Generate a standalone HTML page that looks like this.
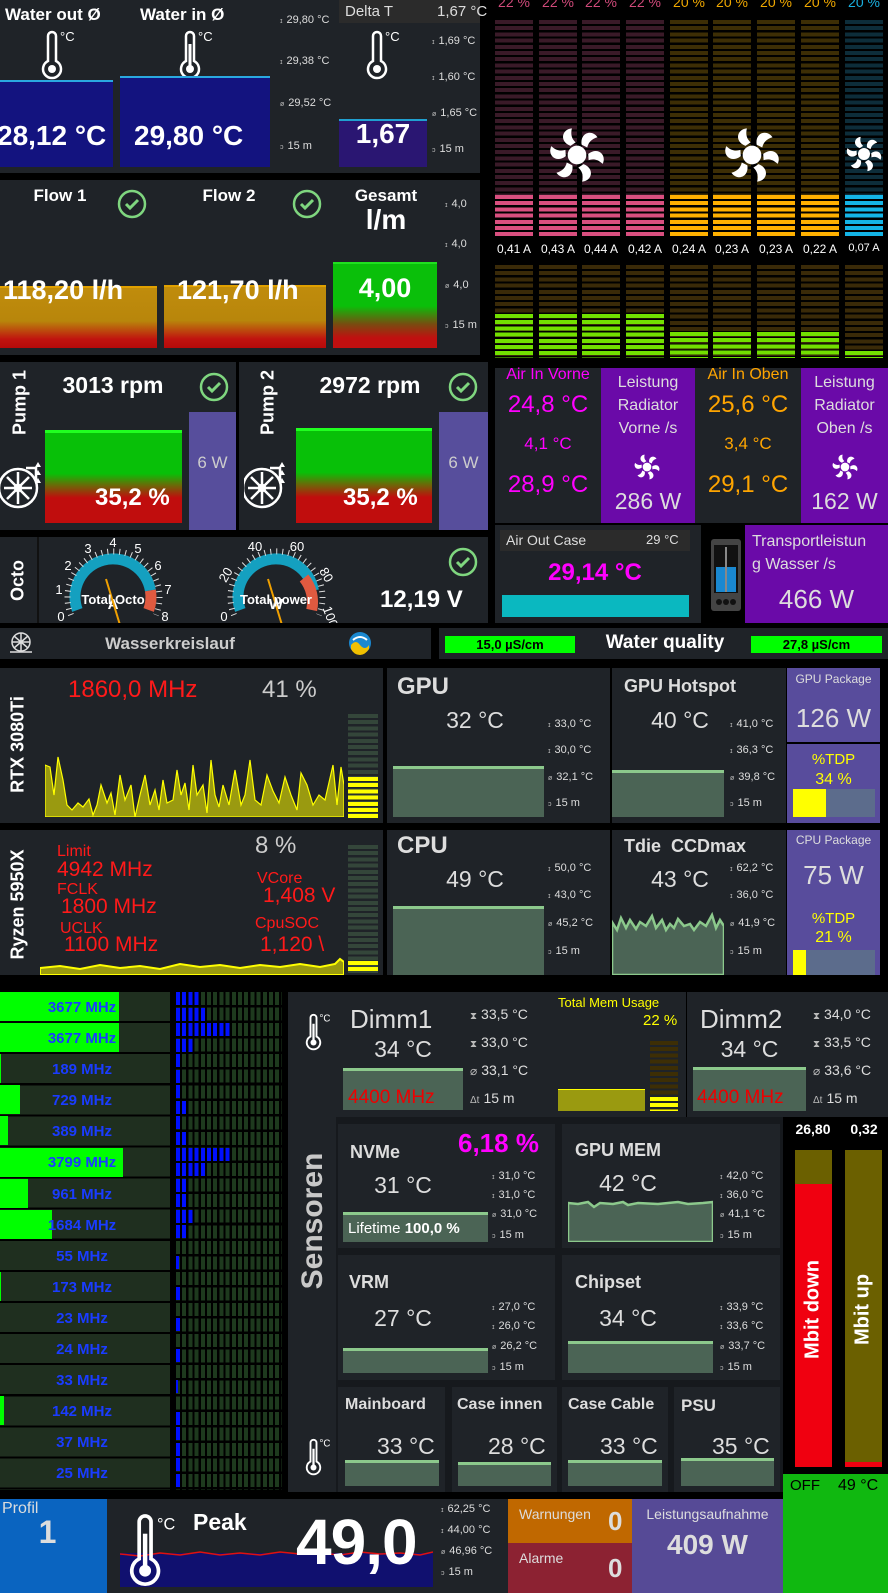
<!DOCTYPE html>
<html><head><meta charset="utf-8"><style>
*{margin:0;padding:0;box-sizing:border-box}
body{width:888px;height:1593px;background:#000;position:relative;overflow:hidden;font-family:"Liberation Sans",sans-serif;color:#fff}
div,span,svg{position:absolute}
.p{background:#1f2328}
.b{font-weight:bold}
.st{font-size:11px;color:#ddd;white-space:nowrap}
.st i{font-style:normal;font-size:7px;margin-right:4px;color:#bbb}
.c{text-align:center;white-space:nowrap}
.nw{white-space:nowrap}
.ch{background:#4b6455;border-top:3px solid #8cc98c}
.vt{transform:rotate(-90deg);transform-origin:center;white-space:nowrap;text-align:center}
.stripe{background:repeating-linear-gradient(to bottom,var(--c) 0 4px,transparent 4px 6.2px)}
.hs{background:repeating-linear-gradient(to right,var(--c) 0 4px,transparent 4px 6.2px)}
</style></head><body>

<!-- ===== TOP LEFT: water temps ===== -->
<div class="p" style="left:0;top:0;width:480px;height:173px"></div>
<div class="b nw" style="left:5px;top:5px;font-size:17px">Water out Ø</div>
<div class="b nw" style="left:140px;top:5px;font-size:17px">Water in Ø</div>
<svg style="left:38px;top:28px" width="40" height="54" viewBox="0 0 40 54"><path d="M10 8 a4 4 0 0 1 8 0 v25 a9 9 0 1 1 -8 0z" fill="none" stroke="#fff" stroke-width="2.5"/><circle cx="14" cy="41" r="4" fill="#fff"/><text x="22" y="13" fill="#fff" font-size="13" font-family="Liberation Sans">°C</text></svg>
<svg style="left:176px;top:28px" width="40" height="54" viewBox="0 0 40 54"><path d="M10 8 a4 4 0 0 1 8 0 v25 a9 9 0 1 1 -8 0z" fill="none" stroke="#fff" stroke-width="2.5"/><line x1="14" y1="16" x2="14" y2="38" stroke="#fff" stroke-width="3"/><circle cx="14" cy="41" r="4" fill="#fff"/><text x="22" y="13" fill="#fff" font-size="13" font-family="Liberation Sans">°C</text></svg>
<div style="left:0;top:80px;width:113px;height:87px;background:#13137f;border-top:2px solid #2aa8e0"></div>
<div style="left:120px;top:76px;width:150px;height:91px;background:#13137f;border-top:2px solid #2aa8e0"></div>
<div class="b nw" style="left:-3px;top:120px;font-size:28px">28,12 °C</div>
<div class="b nw" style="left:134px;top:120px;font-size:28px">29,80 °C</div>
<div class="st" style="left:280px;top:14px"><i>ɪ</i>29,80 °C</div>
<div class="st" style="left:280px;top:55px"><i>ɪ</i>29,38 °C</div>
<div class="st" style="left:280px;top:97px"><i>ø</i>29,52 °C</div>
<div class="st" style="left:280px;top:140px"><i>ↄ</i>15 m</div>
<div style="left:339px;top:0;width:141px;height:23px;background:#2b2b2b"></div>
<div class="nw" style="left:345px;top:3px;font-size:15px;color:#ddd">Delta T</div>
<div class="nw" style="left:437px;top:3px;font-size:15px;color:#ddd">1,67 °C</div>
<svg style="left:363px;top:28px" width="40" height="54" viewBox="0 0 40 54"><path d="M10 8 a4 4 0 0 1 8 0 v25 a9 9 0 1 1 -8 0z" fill="none" stroke="#fff" stroke-width="2.5"/><circle cx="14" cy="41" r="4" fill="#fff"/><text x="22" y="13" fill="#fff" font-size="13" font-family="Liberation Sans">°C</text></svg>
<div style="left:339px;top:119px;width:88px;height:48px;background:#2a1672;border-top:2px solid #20a0d0"></div>
<div class="b c" style="left:339px;top:118px;width:88px;font-size:28px">1,67</div>
<div class="st" style="left:432px;top:35px"><i>ɪ</i>1,69 °C</div>
<div class="st" style="left:432px;top:71px"><i>ɪ</i>1,60 °C</div>
<div class="st" style="left:432px;top:107px"><i>ø</i>1,65 °C</div>
<div class="st" style="left:432px;top:143px"><i>ↄ</i>15 m</div>

<!-- ===== Flow ===== -->
<div class="p" style="left:0;top:180px;width:480px;height:175px"></div>
<div class="b c" style="left:20px;top:186px;width:80px;font-size:17px">Flow 1</div>
<div class="b c" style="left:189px;top:186px;width:80px;font-size:17px">Flow 2</div>
<svg style="left:117px;top:189px" width="30" height="30"><circle cx="15" cy="15" r="13" fill="none" stroke="#7fd67f" stroke-width="2.5"/><path d="M9 15 l4 4 l8 -8" stroke="#7fd67f" stroke-width="3" fill="none"/></svg>
<svg style="left:292px;top:189px" width="30" height="30"><circle cx="15" cy="15" r="13" fill="none" stroke="#7fd67f" stroke-width="2.5"/><path d="M9 15 l4 4 l8 -8" stroke="#7fd67f" stroke-width="3" fill="none"/></svg>
<div class="b c" style="left:336px;top:186px;width:100px;font-size:17px">Gesamt</div>
<div class="b c" style="left:336px;top:204px;width:100px;font-size:28px">l/m</div>
<div style="left:0;top:286px;width:157px;height:62px;background:linear-gradient(#c08c0c 0%,#b8860b 55%,#c0140f 85%,#b50a0a 100%);border-top:2px solid #e0a000"></div>
<div style="left:164px;top:285px;width:162px;height:63px;background:linear-gradient(#c08c0c 0%,#b8860b 55%,#c0140f 85%,#b50a0a 100%);border-top:2px solid #e0a000"></div>
<div style="left:333px;top:262px;width:104px;height:86px;background:linear-gradient(#0abf0a 0%,#0abf0a 50%,#7a4a10 72%,#c01010 88%,#c01010 100%);border-top:2px solid #20e020"></div>
<div class="b nw" style="left:3px;top:275px;font-size:27px">118,20 l/h</div>
<div class="b nw" style="left:177px;top:275px;font-size:27px">121,70 l/h</div>
<div class="b c" style="left:333px;top:273px;width:104px;font-size:27px">4,00</div>
<div class="st" style="left:445px;top:198px"><i>ɪ</i>4,0</div>
<div class="st" style="left:445px;top:238px"><i>ɪ</i>4,0</div>
<div class="st" style="left:445px;top:279px"><i>ø</i>4,0</div>
<div class="st" style="left:445px;top:319px"><i>ↄ</i>15 m</div>

<!-- ===== Fans ===== -->
<div id="fans"></div>
<div style="left:495px;top:20px;width:38px;height:175px;--c:#3a1a28" class="stripe"></div>
<div style="left:539px;top:20px;width:38px;height:175px;--c:#3a1a28" class="stripe"></div>
<div style="left:582px;top:20px;width:38px;height:175px;--c:#3a1a28" class="stripe"></div>
<div style="left:626px;top:20px;width:38px;height:175px;--c:#3a1a28" class="stripe"></div>
<div style="left:670px;top:20px;width:38px;height:175px;--c:#3d2e05" class="stripe"></div>
<div style="left:713px;top:20px;width:38px;height:175px;--c:#3d2e05" class="stripe"></div>
<div style="left:757px;top:20px;width:38px;height:175px;--c:#3d2e05" class="stripe"></div>
<div style="left:801px;top:20px;width:38px;height:175px;--c:#3d2e05" class="stripe"></div>
<div style="left:845px;top:20px;width:38px;height:175px;--c:#0d2d3a" class="stripe"></div>
<div style="left:495px;top:195px;width:38px;height:42px;--c:#d94f7f" class="stripe"></div>
<div style="left:539px;top:195px;width:38px;height:42px;--c:#d94f7f" class="stripe"></div>
<div style="left:582px;top:195px;width:38px;height:42px;--c:#d94f7f" class="stripe"></div>
<div style="left:626px;top:195px;width:38px;height:42px;--c:#d94f7f" class="stripe"></div>
<div style="left:670px;top:195px;width:38px;height:42px;--c:#ffb000" class="stripe"></div>
<div style="left:713px;top:195px;width:38px;height:42px;--c:#ffb000" class="stripe"></div>
<div style="left:757px;top:195px;width:38px;height:42px;--c:#ffb000" class="stripe"></div>
<div style="left:801px;top:195px;width:38px;height:42px;--c:#ffb000" class="stripe"></div>
<div style="left:845px;top:195px;width:38px;height:42px;--c:#14b4e6" class="stripe"></div>
<div class="c" style="left:489px;top:-6px;width:50px;font-size:14px;color:#d04a7a">22 %</div>
<div class="c" style="left:533px;top:-6px;width:50px;font-size:14px;color:#d04a7a">22 %</div>
<div class="c" style="left:576px;top:-6px;width:50px;font-size:14px;color:#d04a7a">22 %</div>
<div class="c" style="left:620px;top:-6px;width:50px;font-size:14px;color:#d04a7a">22 %</div>
<div class="c" style="left:664px;top:-6px;width:50px;font-size:14px;color:#f0a800">20 %</div>
<div class="c" style="left:707px;top:-6px;width:50px;font-size:14px;color:#f0a800">20 %</div>
<div class="c" style="left:751px;top:-6px;width:50px;font-size:14px;color:#f0a800">20 %</div>
<div class="c" style="left:795px;top:-6px;width:50px;font-size:14px;color:#f0a800">20 %</div>
<div class="c" style="left:839px;top:-6px;width:50px;font-size:14px;color:#1ab0e0">20 %</div>
<div class="c" style="left:489px;top:242px;width:50px;font-size:12px">0,41 A</div>
<div class="c" style="left:533px;top:242px;width:50px;font-size:12px">0,43 A</div>
<div class="c" style="left:576px;top:242px;width:50px;font-size:12px">0,44 A</div>
<div class="c" style="left:620px;top:242px;width:50px;font-size:12px">0,42 A</div>
<div class="c" style="left:664px;top:242px;width:50px;font-size:12px">0,24 A</div>
<div class="c" style="left:707px;top:242px;width:50px;font-size:12px">0,23 A</div>
<div class="c" style="left:751px;top:242px;width:50px;font-size:12px">0,23 A</div>
<div class="c" style="left:795px;top:242px;width:50px;font-size:12px">0,22 A</div>
<div class="c" style="left:839px;top:242px;width:50px;font-size:11px">0,07 A</div>
<div style="left:495px;top:265px;width:38px;height:93px;--c:#3a2a08" class="stripe"></div>
<div style="left:539px;top:265px;width:38px;height:93px;--c:#3a2a08" class="stripe"></div>
<div style="left:582px;top:265px;width:38px;height:93px;--c:#3a2a08" class="stripe"></div>
<div style="left:626px;top:265px;width:38px;height:93px;--c:#3a2a08" class="stripe"></div>
<div style="left:670px;top:265px;width:38px;height:93px;--c:#3a2a08" class="stripe"></div>
<div style="left:713px;top:265px;width:38px;height:93px;--c:#3a2a08" class="stripe"></div>
<div style="left:757px;top:265px;width:38px;height:93px;--c:#3a2a08" class="stripe"></div>
<div style="left:801px;top:265px;width:38px;height:93px;--c:#3a2a08" class="stripe"></div>
<div style="left:845px;top:265px;width:38px;height:93px;--c:#3a2a08" class="stripe"></div>
<div style="left:495px;top:314px;width:38px;height:44px;--c:#72e000" class="stripe"></div>
<div style="left:539px;top:314px;width:38px;height:44px;--c:#72e000" class="stripe"></div>
<div style="left:582px;top:314px;width:38px;height:44px;--c:#72e000" class="stripe"></div>
<div style="left:626px;top:314px;width:38px;height:44px;--c:#72e000" class="stripe"></div>
<div style="left:670px;top:332px;width:38px;height:26px;--c:#72e000" class="stripe"></div>
<div style="left:713px;top:332px;width:38px;height:26px;--c:#72e000" class="stripe"></div>
<div style="left:757px;top:332px;width:38px;height:26px;--c:#72e000" class="stripe"></div>
<div style="left:801px;top:332px;width:38px;height:26px;--c:#72e000" class="stripe"></div>
<div style="left:845px;top:351px;width:38px;height:7px;--c:#72e000" class="stripe"></div>
<svg style="left:549px;top:127px" width="56" height="56" viewBox="-30 -30 60 60"><g fill="#fff"><circle r="10"/><path id="bl" d="M5,-11 C3,-24 16,-28 22,-19 C15,-17 12,-13 11,-8 Z"/><path d="M5,-11 C3,-24 16,-28 22,-19 C15,-17 12,-13 11,-8 Z" transform="rotate(60)"/><path d="M5,-11 C3,-24 16,-28 22,-19 C15,-17 12,-13 11,-8 Z" transform="rotate(120)"/><path d="M5,-11 C3,-24 16,-28 22,-19 C15,-17 12,-13 11,-8 Z" transform="rotate(180)"/><path d="M5,-11 C3,-24 16,-28 22,-19 C15,-17 12,-13 11,-8 Z" transform="rotate(240)"/><path d="M5,-11 C3,-24 16,-28 22,-19 C15,-17 12,-13 11,-8 Z" transform="rotate(300)"/></g></svg>
<svg style="left:724px;top:127px" width="56" height="56" viewBox="-30 -30 60 60"><g fill="#fff"><circle r="10"/><path d="M5,-11 C3,-24 16,-28 22,-19 C15,-17 12,-13 11,-8 Z"/><path d="M5,-11 C3,-24 16,-28 22,-19 C15,-17 12,-13 11,-8 Z" transform="rotate(60)"/><path d="M5,-11 C3,-24 16,-28 22,-19 C15,-17 12,-13 11,-8 Z" transform="rotate(120)"/><path d="M5,-11 C3,-24 16,-28 22,-19 C15,-17 12,-13 11,-8 Z" transform="rotate(180)"/><path d="M5,-11 C3,-24 16,-28 22,-19 C15,-17 12,-13 11,-8 Z" transform="rotate(240)"/><path d="M5,-11 C3,-24 16,-28 22,-19 C15,-17 12,-13 11,-8 Z" transform="rotate(300)"/></g></svg>
<svg style="left:846px;top:136px" width="36" height="36" viewBox="-30 -30 60 60"><g fill="#fff"><circle r="10"/><path d="M5,-11 C3,-24 16,-28 22,-19 C15,-17 12,-13 11,-8 Z"/><path d="M5,-11 C3,-24 16,-28 22,-19 C15,-17 12,-13 11,-8 Z" transform="rotate(60)"/><path d="M5,-11 C3,-24 16,-28 22,-19 C15,-17 12,-13 11,-8 Z" transform="rotate(120)"/><path d="M5,-11 C3,-24 16,-28 22,-19 C15,-17 12,-13 11,-8 Z" transform="rotate(180)"/><path d="M5,-11 C3,-24 16,-28 22,-19 C15,-17 12,-13 11,-8 Z" transform="rotate(240)"/><path d="M5,-11 C3,-24 16,-28 22,-19 C15,-17 12,-13 11,-8 Z" transform="rotate(300)"/></g></svg>

<!-- ===== Pumps ===== -->
<div class="p" style="left:0;top:362px;width:236px;height:168px"></div>
<div class="p" style="left:239px;top:362px;width:249px;height:168px"></div>
<div class="b vt" style="left:-20px;top:392px;width:80px;font-size:18px">Pump 1</div>
<div class="b vt" style="left:228px;top:392px;width:80px;font-size:18px">Pump 2</div>
<div class="b c" style="left:48px;top:372px;width:130px;font-size:23px">3013 rpm</div>
<div class="b c" style="left:305px;top:372px;width:130px;font-size:23px">2972 rpm</div>
<svg style="left:199px;top:372px" width="30" height="30"><circle cx="15" cy="15" r="13" fill="none" stroke="#7fd67f" stroke-width="2.5"/><path d="M9 15 l4 4 l8 -8" stroke="#7fd67f" stroke-width="3" fill="none"/></svg>
<svg style="left:448px;top:372px" width="30" height="30"><circle cx="15" cy="15" r="13" fill="none" stroke="#7fd67f" stroke-width="2.5"/><path d="M9 15 l4 4 l8 -8" stroke="#7fd67f" stroke-width="3" fill="none"/></svg>
<svg style="left:0;top:460px" width="44" height="50" viewBox="0 0 44 50"><g stroke="#fff" fill="none" stroke-width="2.5"><circle cx="18" cy="28" r="19"/><circle cx="18" cy="28" r="3"/><path d="M18 12v32M4 28h28M7 17l22 22M29 17L7 39"/><path d="M26 8h10v12"/></g><g fill="#fff"><path d="M38 2l3 5h-6z"/><path d="M38 10l3 5h-6z"/><path d="M38 18l3 5h-6z"/></g></svg>
<svg style="left:244px;top:460px" width="44" height="50" viewBox="0 0 44 50"><g stroke="#fff" fill="none" stroke-width="2.5"><circle cx="18" cy="28" r="19"/><circle cx="18" cy="28" r="3"/><path d="M18 12v32M4 28h28M7 17l22 22M29 17L7 39"/><path d="M26 8h10v12"/></g><g fill="#fff"><path d="M38 2l3 5h-6z"/><path d="M38 10l3 5h-6z"/><path d="M38 18l3 5h-6z"/></g></svg>
<div style="left:45px;top:430px;width:137px;height:93px;background:linear-gradient(#08c008 0%,#08c008 45%,#6a6a08 58%,#c00d0d 72%,#c00d0d 100%);border-top:3px solid #20ff20"></div>
<div style="left:296px;top:428px;width:136px;height:95px;background:linear-gradient(#08c008 0%,#08c008 45%,#6a6a08 58%,#c00d0d 72%,#c00d0d 100%);border-top:3px solid #20ff20"></div>
<div class="b nw" style="left:95px;top:484px;font-size:24px">35,2 %</div>
<div class="b nw" style="left:343px;top:484px;font-size:24px">35,2 %</div>
<div style="left:189px;top:412px;width:47px;height:118px;background:#574e9c"></div>
<div style="left:439px;top:412px;width:49px;height:118px;background:#574e9c"></div>
<div class="c" style="left:189px;top:453px;width:47px;font-size:17px;color:#ccc">6 W</div>
<div class="c" style="left:439px;top:453px;width:49px;font-size:17px;color:#ccc">6 W</div>

<!-- ===== Octo ===== -->
<div class="p" style="left:0;top:537px;width:488px;height:86px"></div>
<div style="left:37px;top:537px;width:2px;height:86px;background:#111"></div>
<div class="b vt" style="left:-22px;top:570px;width:80px;font-size:18px">Octo</div>
<svg style="left:38px;top:537px" width="380" height="86" viewBox="0 0 380 86" font-family="Liberation Sans">
<path d="M39.3 73 A38 38 0 1 1 112.4 53.4" fill="none" stroke="#14a0c0" stroke-width="11"/>
<path d="M112.4 53.4 A38 38 0 0 1 110.7 73" fill="none" stroke="#e05a40" stroke-width="11"/>
<path d="M33 78 A46 46 0 1 1 118 78" fill="none" stroke="#ddd" stroke-width="6" stroke-dasharray="1 5"/>
<g fill="#fff" font-size="13" text-anchor="middle"><text x="23" y="84">0</text><text x="21" y="57">1</text><text x="30" y="33">2</text><text x="50" y="16">3</text><text x="75" y="10">4</text><text x="100" y="16">5</text><text x="120" y="33">6</text><text x="130" y="57">7</text><text x="127" y="84">8</text></g>
<text x="75" y="72" fill="#fff" font-size="15" font-weight="bold" text-anchor="middle">A</text>
<text x="75" y="68" dy="0" fill="none"></text>
<line x1="68" y1="42" x2="82" y2="88" stroke="#f0a000" stroke-width="2"/>
<text x="75" y="68" fill="none"></text>
<text x="78" y="67" fill="none"></text>
<text x="75" y="67" fill="none"></text>
<path d="M202.3 73 A38 38 0 1 1 275.4 53.4" fill="none" stroke="#14a0c0" stroke-width="11"/>
<path d="M275.4 53.4 A38 38 0 0 0 262 40" fill="none" stroke="none"/>
<path d="M266 41 A38 38 0 0 1 273.7 73" fill="none" stroke="#e05a40" stroke-width="11"/>
<path d="M196 78 A46 46 0 1 1 281 78" fill="none" stroke="#ddd" stroke-width="6" stroke-dasharray="1 5"/>
<g fill="#fff" font-size="13" text-anchor="middle"><text x="186" y="84">0</text><text x="188" y="42" transform="rotate(-60 188 38)">20</text><text x="217" y="14">40</text><text x="259" y="14">60</text><text x="288" y="42" transform="rotate(60 288 38)">80</text><text x="292" y="84" transform="rotate(70 292 80)">100</text></g>
<text x="238" y="72" fill="#fff" font-size="15" font-weight="bold" text-anchor="middle">W</text>
<line x1="230" y1="42" x2="244" y2="88" stroke="#f0a000" stroke-width="2"/>
<text x="75" y="66" fill="none"></text>
</svg>
<div class="b c" style="left:63px;top:592px;width:100px;font-size:13px">Total Octo</div>
<div class="b c" style="left:226px;top:592px;width:100px;font-size:13px">Total power</div>
<svg style="left:448px;top:547px" width="30" height="30"><circle cx="15" cy="15" r="13" fill="none" stroke="#7fd67f" stroke-width="2.5"/><path d="M9 15 l4 4 l8 -8" stroke="#7fd67f" stroke-width="3" fill="none"/></svg>
<div class="b nw" style="left:380px;top:586px;font-size:24px">12,19 V</div>

<!-- ===== Air panels ===== -->
<div class="p" style="left:495px;top:368px;width:106px;height:155px"></div>
<div style="left:601px;top:368px;width:94px;height:155px;background:#6a0aa8"></div>
<div class="p" style="left:695px;top:368px;width:106px;height:155px"></div>
<div style="left:801px;top:368px;width:87px;height:155px;background:#6a0aa8"></div>
<div class="c" style="left:495px;top:366px;width:106px;font-size:16px;color:#ff00ff">Air In Vorne</div>
<div class="c" style="left:495px;top:391px;width:106px;font-size:24px;color:#ff00ff">24,8 °C</div>
<div class="c" style="left:495px;top:434px;width:106px;font-size:17px;color:#ff00ff">4,1 °C</div>
<div class="c" style="left:495px;top:471px;width:106px;font-size:24px;color:#ff00ff">28,9 °C</div>
<div class="c" style="left:695px;top:366px;width:106px;font-size:16px;color:#ffa500">Air In Oben</div>
<div class="c" style="left:695px;top:391px;width:106px;font-size:24px;color:#ffa500">25,6 °C</div>
<div class="c" style="left:695px;top:434px;width:106px;font-size:17px;color:#ffa500">3,4 °C</div>
<div class="c" style="left:695px;top:471px;width:106px;font-size:24px;color:#ffa500">29,1 °C</div>
<div class="c" style="left:601px;top:371px;width:94px;font-size:16px;line-height:23px;color:#ddd">Leistung<br>Radiator<br>Vorne /s</div>
<div class="c" style="left:801px;top:371px;width:87px;font-size:16px;line-height:23px;color:#ddd">Leistung<br>Radiator<br>Oben /s</div>
<svg style="left:634px;top:454px" width="26" height="26" viewBox="-30 -30 60 60"><g fill="#fff"><circle r="10"/><path d="M5,-11 C3,-24 16,-28 22,-19 C15,-17 12,-13 11,-8 Z"/><path d="M5,-11 C3,-24 16,-28 22,-19 C15,-17 12,-13 11,-8 Z" transform="rotate(60)"/><path d="M5,-11 C3,-24 16,-28 22,-19 C15,-17 12,-13 11,-8 Z" transform="rotate(120)"/><path d="M5,-11 C3,-24 16,-28 22,-19 C15,-17 12,-13 11,-8 Z" transform="rotate(180)"/><path d="M5,-11 C3,-24 16,-28 22,-19 C15,-17 12,-13 11,-8 Z" transform="rotate(240)"/><path d="M5,-11 C3,-24 16,-28 22,-19 C15,-17 12,-13 11,-8 Z" transform="rotate(300)"/></g></svg>
<svg style="left:832px;top:454px" width="26" height="26" viewBox="-30 -30 60 60"><g fill="#fff"><circle r="10"/><path d="M5,-11 C3,-24 16,-28 22,-19 C15,-17 12,-13 11,-8 Z"/><path d="M5,-11 C3,-24 16,-28 22,-19 C15,-17 12,-13 11,-8 Z" transform="rotate(60)"/><path d="M5,-11 C3,-24 16,-28 22,-19 C15,-17 12,-13 11,-8 Z" transform="rotate(120)"/><path d="M5,-11 C3,-24 16,-28 22,-19 C15,-17 12,-13 11,-8 Z" transform="rotate(180)"/><path d="M5,-11 C3,-24 16,-28 22,-19 C15,-17 12,-13 11,-8 Z" transform="rotate(240)"/><path d="M5,-11 C3,-24 16,-28 22,-19 C15,-17 12,-13 11,-8 Z" transform="rotate(300)"/></g></svg>
<div class="c" style="left:601px;top:488px;width:94px;font-size:23px;color:#ddd">286 W</div>
<div class="c" style="left:801px;top:488px;width:87px;font-size:23px;color:#ddd">162 W</div>

<div class="p" style="left:495px;top:525px;width:206px;height:98px"></div>
<div style="left:500px;top:530px;width:190px;height:21px;background:#2b2b2b"></div>
<div class="nw" style="left:506px;top:532px;font-size:14px;color:#ddd">Air Out Case</div>
<div class="nw" style="left:646px;top:532px;font-size:13px;color:#ddd">29 °C</div>
<div class="b c" style="left:495px;top:559px;width:200px;font-size:24px;color:#ff00ff">29,14 °C</div>
<div style="left:502px;top:595px;width:187px;height:22px;background:#0ab8c0"></div>
<svg style="left:709px;top:537px" width="34" height="76" viewBox="0 0 34 76"><rect x="2" y="2" width="30" height="72" rx="3" fill="#444"/><rect x="5" y="8" width="24" height="48" fill="#111"/><rect x="7" y="30" width="20" height="25" fill="#1a88d0"/><line x1="17" y1="10" x2="17" y2="55" stroke="#888" stroke-width="2"/><circle cx="10" cy="65" r="3" fill="#111"/><circle cx="17" cy="65" r="3" fill="#111"/><circle cx="24" cy="65" r="3" fill="#111"/></svg>
<div style="left:745px;top:525px;width:143px;height:98px;background:#6a0aa8"></div>
<div style="left:752px;top:530px;width:136px;font-size:16px;line-height:23px;color:#ddd">Transportleistun<br>g Wasser /s</div>
<div class="c" style="left:745px;top:584px;width:143px;font-size:26px;color:#ddd">466 W</div>

<!-- ===== Wasserkreislauf row ===== -->
<div class="p" style="left:0;top:628px;width:431px;height:31px"></div>
<svg style="left:8px;top:630px" width="26" height="24" viewBox="0 0 26 24"><g stroke="#ddd" fill="none" stroke-width="1.5"><circle cx="13" cy="12" r="9"/><path d="M13 3v18M4 12h18M6 6l14 12M20 6L6 18"/><path d="M2 22h22"/></g></svg>
<div class="b c" style="left:70px;top:634px;width:200px;font-size:17px;color:#ccc">Wasserkreislauf</div>
<svg style="left:347px;top:629px" width="26" height="28" viewBox="0 0 26 28"><circle cx="13" cy="14" r="11" fill="#1a88d0"/><path d="M4 16 q5 -6 9 0 q5 6 9 0 v4 q-4 6 -9 6 q-6 0 -9 -6z" fill="#f0c000"/><path d="M6 11 q7 -6 14 0" stroke="#fff" stroke-width="2" fill="none"/></svg>
<div class="p" style="left:439px;top:628px;width:449px;height:31px"></div>
<div style="left:445px;top:636px;width:130px;height:17px;background:#00ff00"></div>
<div class="c b" style="left:445px;top:637px;width:130px;font-size:13px;color:#000">15,0 µS/cm</div>
<div class="b c" style="left:585px;top:632px;width:160px;font-size:19px">Water quality</div>
<div style="left:751px;top:636px;width:131px;height:17px;background:#00ff00"></div>
<div class="c b" style="left:751px;top:637px;width:131px;font-size:13px;color:#000">27,8 µS/cm</div>

<!-- ===== GPU row ===== -->
<div class="p" style="left:0;top:668px;width:383px;height:155px"></div>
<div class="b vt" style="left:-42px;top:734px;width:120px;font-size:18px">RTX 3080Ti</div>
<div class="nw" style="left:68px;top:676px;font-size:24px;color:#ff1a1a">1860,0 MHz</div>
<div class="nw" style="left:262px;top:676px;font-size:24px;color:#ccc">41 %</div>
<svg style="left:45px;top:755px" width="299" height="62" viewBox="0 0 299 62"><polygon points="0,10 5,12 9,40 13,2 18,25 22,50 27,55 33,48 38,52 44,44 48,60 52,50 56,30 62,48 66,38 70,60 75,20 80,45 86,30 90,62 95,40 100,20 105,50 110,35 114,55 118,25 122,48 128,45 132,15 136,40 140,28 144,55 148,10 152,40 158,30 162,58 166,5 170,40 174,52 178,30 184,50 190,15 196,50 200,40 205,5 210,45 216,50 222,20 228,36 234,48 240,22 246,40 252,55 256,18 262,30 268,50 274,40 280,45 288,10 292,50 296,12 299,30 299,62 0,62" fill="#9a9a10" stroke="#ffff00" stroke-width="1.2"/></svg>
<div style="left:348px;top:714px;width:30px;height:104px;--c:#34463a" class="stripe"></div>
<div style="left:348px;top:777px;width:30px;height:41px;--c:#ffff00" class="stripe"></div>

<div class="p" style="left:387px;top:668px;width:223px;height:155px"></div>
<div class="b nw" style="left:397px;top:673px;font-size:24px;color:#ddd">GPU</div>
<div class="c" style="left:420px;top:707px;width:110px;font-size:23px;color:#ddd">32 °C</div>
<div class="ch" style="left:393px;top:766px;width:151px;height:51px"></div>
<div class="st" style="left:548px;top:718px"><i>ɪ</i>33,0 °C</div>
<div class="st" style="left:548px;top:744px"><i>ɪ</i>30,0 °C</div>
<div class="st" style="left:548px;top:771px"><i>ø</i>32,1 °C</div>
<div class="st" style="left:548px;top:797px"><i>ↄ</i>15 m</div>
<div class="p" style="left:612px;top:668px;width:174px;height:155px"></div>
<div class="b nw" style="left:624px;top:676px;font-size:18px;color:#ddd">GPU Hotspot</div>
<div class="c" style="left:625px;top:707px;width:110px;font-size:23px;color:#ddd">40 °C</div>
<div class="ch" style="left:612px;top:770px;width:112px;height:47px"></div>
<div class="st" style="left:730px;top:718px"><i>ɪ</i>41,0 °C</div>
<div class="st" style="left:730px;top:744px"><i>ɪ</i>36,3 °C</div>
<div class="st" style="left:730px;top:771px"><i>ø</i>39,8 °C</div>
<div class="st" style="left:730px;top:797px"><i>ↄ</i>15 m</div>
<div style="left:787px;top:668px;width:93px;height:74px;background:#584c9c"></div>
<div style="left:787px;top:744px;width:93px;height:79px;background:#584c9c"></div>
<div class="c" style="left:787px;top:672px;width:93px;font-size:12px;color:#ddd">GPU Package</div>
<div class="c" style="left:787px;top:703px;width:93px;font-size:26px;color:#ddd">126 W</div>
<div class="c" style="left:787px;top:751px;width:93px;font-size:15px;color:#ff0">%TDP</div>
<div class="c" style="left:787px;top:771px;width:93px;font-size:16px;color:#ff0">34 %</div>
<div style="left:793px;top:789px;width:82px;height:28px;background:#5c6c8c"></div>
<div style="left:793px;top:789px;width:33px;height:28px;background:#ffff00"></div>

<!-- ===== CPU row ===== -->
<div class="p" style="left:0;top:830px;width:383px;height:145px"></div>
<div class="b vt" style="left:-42px;top:894px;width:120px;font-size:18px">Ryzen 5950X</div>
<div class="nw" style="left:57px;top:843px;font-size:16px;color:#ff1a1a">Limit</div>
<div class="nw" style="left:57px;top:858px;font-size:21px;color:#ff1a1a">4942 MHz</div>
<div class="nw" style="left:57px;top:881px;font-size:16px;color:#ff1a1a">FCLK</div>
<div class="nw" style="left:61px;top:895px;font-size:21px;color:#ff1a1a">1800 MHz</div>
<div class="nw" style="left:60px;top:920px;font-size:16px;color:#ff1a1a">UCLK</div>
<div class="nw" style="left:64px;top:933px;font-size:21px;color:#ff1a1a">1100 MHz</div>
<div class="nw" style="left:255px;top:832px;font-size:24px;color:#ccc">8 %</div>
<div class="nw" style="left:257px;top:870px;font-size:16px;color:#ff1a1a">VCore</div>
<div class="nw" style="left:263px;top:884px;font-size:21px;color:#ff1a1a">1,408 V</div>
<div class="nw" style="left:255px;top:915px;font-size:16px;color:#ff1a1a">CpuSOC</div>
<div class="nw" style="left:260px;top:933px;font-size:21px;color:#ff1a1a">1,120 \</div>
<svg style="left:40px;top:956px" width="304" height="19" viewBox="0 0 304 19"><polygon points="0,12 20,10 40,13 60,9 80,12 100,10 120,13 140,8 160,11 180,9 200,12 220,9 240,11 260,8 280,11 295,8 300,3 304,6 304,19 0,19" fill="#9a9a10" stroke="#ffff00" stroke-width="2"/></svg>
<div style="left:348px;top:845px;width:30px;height:128px;--c:#34463a" class="stripe"></div>
<div style="left:348px;top:961px;width:30px;height:12px;--c:#ffff00" class="stripe"></div>
<div class="p" style="left:387px;top:830px;width:223px;height:145px"></div>
<div class="b nw" style="left:397px;top:832px;font-size:24px;color:#ddd">CPU</div>
<div class="c" style="left:420px;top:866px;width:110px;font-size:23px;color:#ddd">49 °C</div>
<div class="ch" style="left:393px;top:906px;width:151px;height:69px"></div>
<div class="st" style="left:548px;top:862px"><i>ɪ</i>50,0 °C</div>
<div class="st" style="left:548px;top:889px"><i>ɪ</i>43,0 °C</div>
<div class="st" style="left:548px;top:917px"><i>ø</i>45,2 °C</div>
<div class="st" style="left:548px;top:945px"><i>ↄ</i>15 m</div>
<div class="p" style="left:612px;top:830px;width:174px;height:145px"></div>
<div class="b nw" style="left:624px;top:836px;font-size:18px;color:#ddd">Tdie&nbsp; CCDmax</div>
<div class="c" style="left:625px;top:866px;width:110px;font-size:23px;color:#ddd">43 °C</div>
<svg style="left:612px;top:912px" width="112" height="63" viewBox="0 0 112 63"><polygon points="0,10 5,18 9,6 14,16 18,8 24,17 28,10 34,14 40,4 44,16 50,8 54,18 58,12 62,16 66,7 72,14 78,12 82,18 88,10 94,14 100,3 104,16 108,8 112,14 112,63 0,63" fill="#4b6455" stroke="#8cc98c" stroke-width="2.5"/></svg>
<div class="st" style="left:730px;top:862px"><i>ɪ</i>62,2 °C</div>
<div class="st" style="left:730px;top:889px"><i>ɪ</i>36,0 °C</div>
<div class="st" style="left:730px;top:917px"><i>ø</i>41,9 °C</div>
<div class="st" style="left:730px;top:945px"><i>ↄ</i>15 m</div>
<div style="left:787px;top:830px;width:93px;height:145px;background:#584c9c"></div>
<div class="c" style="left:787px;top:833px;width:93px;font-size:12px;color:#ddd">CPU Package</div>
<div class="c" style="left:787px;top:860px;width:93px;font-size:26px;color:#ddd">75 W</div>
<div class="c" style="left:787px;top:910px;width:93px;font-size:15px;color:#ff0">%TDP</div>
<div class="c" style="left:787px;top:929px;width:93px;font-size:16px;color:#ff0">21 %</div>
<div style="left:793px;top:950px;width:82px;height:25px;background:#5c6c8c"></div>
<div style="left:793px;top:950px;width:13px;height:25px;background:#ffff00"></div>

<!-- ===== Cores ===== -->
<div style="left:0;top:992px;width:170px;height:498px;background:repeating-linear-gradient(to bottom,#1f2f1f 0 29px,#000 29px 31.1px)"></div>
<div style="left:0;top:992px;width:119px;height:29px;background:#00ff00"></div>
<div style="left:0;top:1023px;width:119px;height:29px;background:#00ff00"></div>
<div style="left:0;top:1054px;width:1px;height:29px;background:#00ff00"></div>
<div style="left:0;top:1085px;width:20px;height:29px;background:#00ff00"></div>
<div style="left:0;top:1116px;width:8px;height:29px;background:#00ff00"></div>
<div style="left:0;top:1148px;width:123px;height:29px;background:#00ff00"></div>
<div style="left:0;top:1179px;width:28px;height:29px;background:#00ff00"></div>
<div style="left:0;top:1210px;width:52px;height:29px;background:#00ff00"></div>
<div style="left:0;top:1272px;width:1px;height:29px;background:#00ff00"></div>
<div style="left:0;top:1396px;width:4px;height:29px;background:#00ff00"></div>
<div style="left:0;top:992px;width:170px;font-size:15px;line-height:31.1px;color:#1a3cff;font-weight:bold;text-align:center;padding-right:6px">3677 MHz<br>3677 MHz<br>189 MHz<br>729 MHz<br>389 MHz<br>3799 MHz<br>961 MHz<br>1684 MHz<br>55 MHz<br>173 MHz<br>23 MHz<br>24 MHz<br>33 MHz<br>142 MHz<br>37 MHz<br>25 MHz</div>
<div style="left:176px;top:992px;width:106px;height:498px;--c:#1e3a1e;background:repeating-linear-gradient(to right,#1e3a1e 0 4px,transparent 4px 6.2px)"></div>
<div style="left:176px;top:992px;width:106px;height:498px;background:repeating-linear-gradient(to bottom,transparent 0 13px,#000 13px 15.55px)"></div>
<div class="hs" style="--c:#0010ff;left:176px;top:992px;width:24px;height:13px"></div>
<div class="hs" style="--c:#0010ff;left:176px;top:1008px;width:30px;height:13px"></div>
<div class="hs" style="--c:#0010ff;left:176px;top:1023px;width:56px;height:13px"></div>
<div class="hs" style="--c:#0010ff;left:176px;top:1039px;width:18px;height:13px"></div>
<div class="hs" style="--c:#0010ff;left:176px;top:1054px;width:5px;height:13px"></div>
<div class="hs" style="--c:#0010ff;left:176px;top:1070px;width:5px;height:13px"></div>
<div class="hs" style="--c:#0010ff;left:176px;top:1085px;width:5px;height:13px"></div>
<div class="hs" style="--c:#0010ff;left:176px;top:1101px;width:10px;height:13px"></div>
<div class="hs" style="--c:#0010ff;left:176px;top:1116px;width:4px;height:13px"></div>
<div class="hs" style="--c:#0010ff;left:176px;top:1132px;width:10px;height:13px"></div>
<div class="hs" style="--c:#0010ff;left:176px;top:1148px;width:54px;height:13px"></div>
<div class="hs" style="--c:#0010ff;left:176px;top:1163px;width:30px;height:13px"></div>
<div class="hs" style="--c:#0010ff;left:176px;top:1179px;width:11px;height:13px"></div>
<div class="hs" style="--c:#0010ff;left:176px;top:1194px;width:10px;height:13px"></div>
<div class="hs" style="--c:#0010ff;left:176px;top:1210px;width:17px;height:13px"></div>
<div class="hs" style="--c:#0010ff;left:176px;top:1225px;width:10px;height:13px"></div>
<div class="hs" style="--c:#0010ff;left:176px;top:1256px;width:3px;height:13px"></div>
<div class="hs" style="--c:#0010ff;left:176px;top:1287px;width:4px;height:13px"></div>
<div class="hs" style="--c:#0010ff;left:176px;top:1318px;width:4px;height:13px"></div>
<div class="hs" style="--c:#0010ff;left:176px;top:1349px;width:4px;height:13px"></div>
<div class="hs" style="--c:#0010ff;left:176px;top:1380px;width:2px;height:13px"></div>
<div class="hs" style="--c:#0010ff;left:176px;top:1412px;width:4px;height:13px"></div>
<div class="hs" style="--c:#0010ff;left:176px;top:1427px;width:4px;height:13px"></div>
<div class="hs" style="--c:#0010ff;left:176px;top:1443px;width:4px;height:13px"></div>
<div class="hs" style="--c:#0010ff;left:176px;top:1458px;width:4px;height:13px"></div>
<div class="hs" style="--c:#0010ff;left:176px;top:1474px;width:4px;height:13px"></div>

<!-- ===== Sensoren ===== -->
<div class="p" style="left:288px;top:992px;width:48px;height:500px"></div>
<div class="p" style="left:288px;top:992px;width:262px;height:125px"></div>
<div class="b vt" style="left:233px;top:1204px;width:160px;font-size:30px;color:#c8c8c8">Sensoren</div>
<svg style="left:303px;top:1010px" width="30" height="44" viewBox="0 0 40 54"><path d="M10 8 a4 4 0 0 1 8 0 v25 a9 9 0 1 1 -8 0z" fill="none" stroke="#fff" stroke-width="2.5"/><line x1="14" y1="16" x2="14" y2="38" stroke="#fff" stroke-width="3"/><circle cx="14" cy="41" r="4" fill="#fff"/><text x="22" y="13" fill="#fff" font-size="13" font-family="Liberation Sans">°C</text></svg>
<svg style="left:303px;top:1435px" width="30" height="44" viewBox="0 0 40 54"><path d="M10 8 a4 4 0 0 1 8 0 v25 a9 9 0 1 1 -8 0z" fill="none" stroke="#fff" stroke-width="2.5"/><line x1="14" y1="16" x2="14" y2="38" stroke="#fff" stroke-width="3"/><circle cx="14" cy="41" r="4" fill="#fff"/><text x="22" y="13" fill="#fff" font-size="13" font-family="Liberation Sans">°C</text></svg>
<div class="nw" style="left:350px;top:1004px;font-size:26px;color:#ddd">Dimm1</div>
<div class="c" style="left:343px;top:1036px;width:120px;font-size:23px;color:#ddd">34 °C</div>
<div class="ch" style="left:343px;top:1068px;width:120px;height:42px"></div>
<div class="nw" style="left:348px;top:1087px;font-size:19px;color:#e00">4400 MHz</div>
<div class="st" style="left:470px;top:1006px;font-size:14px"><i style="font-size:10px">⧗</i>33,5 °C</div>
<div class="st" style="left:470px;top:1034px;font-size:14px"><i style="font-size:10px">⧗</i>33,0 °C</div>
<div class="st" style="left:470px;top:1062px;font-size:14px"><i style="font-size:12px">⌀</i>33,1 °C</div>
<div class="st" style="left:470px;top:1090px;font-size:14px"><i style="font-size:10px">Δt</i>15 m</div>
<div class="p" style="left:550px;top:992px;width:136px;height:125px"></div>
<div class="nw" style="left:558px;top:995px;font-size:13px;color:#ff0">Total Mem Usage</div>
<div class="nw" style="left:643px;top:1012px;font-size:15px;color:#ff0">22 %</div>
<div style="left:558px;top:1089px;width:87px;height:22px;background:#9a9a10;border-top:1px solid #ff0"></div>
<div style="left:650px;top:1041px;width:28px;height:70px;--c:#3d2e05" class="stripe"></div>
<div style="left:650px;top:1097px;width:28px;height:14px;--c:#ffff00" class="stripe"></div>
<div class="p" style="left:687px;top:992px;width:201px;height:125px"></div>
<div class="nw" style="left:700px;top:1004px;font-size:26px;color:#ddd">Dimm2</div>
<div class="c" style="left:693px;top:1036px;width:113px;font-size:23px;color:#ddd">34 °C</div>
<div class="ch" style="left:693px;top:1067px;width:113px;height:44px"></div>
<div class="nw" style="left:697px;top:1087px;font-size:19px;color:#e00">4400 MHz</div>
<div class="st" style="left:813px;top:1006px;font-size:14px"><i style="font-size:10px">⧗</i>34,0 °C</div>
<div class="st" style="left:813px;top:1034px;font-size:14px"><i style="font-size:10px">⧗</i>33,5 °C</div>
<div class="st" style="left:813px;top:1062px;font-size:14px"><i style="font-size:12px">⌀</i>33,6 °C</div>
<div class="st" style="left:813px;top:1090px;font-size:14px"><i style="font-size:10px">Δt</i>15 m</div>

<div style="left:336px;top:1117px;width:447px;height:375px;background:#16191d"></div>
<!-- NVMe -->
<div class="p" style="left:338px;top:1124px;width:217px;height:124px"></div>
<div class="b nw" style="left:350px;top:1142px;font-size:18px;color:#ddd">NVMe</div>
<div class="b nw" style="left:458px;top:1128px;font-size:26px;color:#ff00ff">6,18 %</div>
<div class="c" style="left:343px;top:1172px;width:120px;font-size:23px;color:#ddd">31 °C</div>
<div class="ch" style="left:343px;top:1212px;width:145px;height:30px"></div>
<div class="nw" style="left:348px;top:1220px;font-size:15px;color:#fff">Lifetime <b>100,0 %</b></div>
<div class="st" style="left:492px;top:1170px"><i>ɪ</i>31,0 °C</div>
<div class="st" style="left:492px;top:1189px"><i>ɪ</i>31,0 °C</div>
<div class="st" style="left:492px;top:1208px"><i>ø</i>31,0 °C</div>
<div class="st" style="left:492px;top:1229px"><i>ↄ</i>15 m</div>
<!-- GPU MEM -->
<div class="p" style="left:562px;top:1124px;width:218px;height:124px"></div>
<div class="b nw" style="left:575px;top:1140px;font-size:18px;color:#ddd">GPU MEM</div>
<div class="c" style="left:568px;top:1170px;width:120px;font-size:23px;color:#ddd">42 °C</div>
<svg style="left:568px;top:1200px" width="145" height="42" viewBox="0 0 145 42"><polygon points="0,3 10,4 20,2 26,7 32,3 45,4 55,2 60,5 70,3 90,4 110,2 120,4 135,3 145,2 145,42 0,42" fill="#4b6455" stroke="#8cc98c" stroke-width="2.5"/></svg>
<div class="st" style="left:720px;top:1170px"><i>ɪ</i>42,0 °C</div>
<div class="st" style="left:720px;top:1189px"><i>ɪ</i>36,0 °C</div>
<div class="st" style="left:720px;top:1208px"><i>ø</i>41,1 °C</div>
<div class="st" style="left:720px;top:1229px"><i>ↄ</i>15 m</div>
<!-- VRM -->
<div class="p" style="left:338px;top:1255px;width:217px;height:125px"></div>
<div class="b nw" style="left:349px;top:1272px;font-size:18px;color:#ddd">VRM</div>
<div class="c" style="left:343px;top:1305px;width:120px;font-size:23px;color:#ddd">27 °C</div>
<div class="ch" style="left:343px;top:1348px;width:145px;height:25px"></div>
<div class="st" style="left:492px;top:1301px"><i>ɪ</i>27,0 °C</div>
<div class="st" style="left:492px;top:1320px"><i>ɪ</i>26,0 °C</div>
<div class="st" style="left:492px;top:1340px"><i>ø</i>26,2 °C</div>
<div class="st" style="left:492px;top:1361px"><i>ↄ</i>15 m</div>
<!-- Chipset -->
<div class="p" style="left:562px;top:1255px;width:218px;height:125px"></div>
<div class="b nw" style="left:575px;top:1272px;font-size:18px;color:#ddd">Chipset</div>
<div class="c" style="left:568px;top:1305px;width:120px;font-size:23px;color:#ddd">34 °C</div>
<div class="ch" style="left:568px;top:1341px;width:145px;height:32px"></div>
<div class="st" style="left:720px;top:1301px"><i>ɪ</i>33,9 °C</div>
<div class="st" style="left:720px;top:1320px"><i>ɪ</i>33,6 °C</div>
<div class="st" style="left:720px;top:1340px"><i>ø</i>33,7 °C</div>
<div class="st" style="left:720px;top:1361px"><i>ↄ</i>15 m</div>
<!-- small -->
<div class="p" style="left:338px;top:1387px;width:107px;height:105px"></div>
<div class="p" style="left:452px;top:1387px;width:105px;height:105px"></div>
<div class="p" style="left:562px;top:1387px;width:106px;height:105px"></div>
<div class="p" style="left:674px;top:1387px;width:106px;height:105px"></div>
<div class="b nw" style="left:345px;top:1396px;font-size:16px;color:#ddd">Mainboard</div>
<div class="b nw" style="left:457px;top:1396px;font-size:16px;color:#ddd">Case innen</div>
<div class="b nw" style="left:568px;top:1396px;font-size:16px;color:#ddd">Case Cable</div>
<div class="b nw" style="left:681px;top:1396px;font-size:17px;color:#ddd">PSU</div>
<div class="nw" style="left:377px;top:1433px;font-size:23px;color:#ddd">33 °C</div>
<div class="nw" style="left:488px;top:1433px;font-size:23px;color:#ddd">28 °C</div>
<div class="nw" style="left:600px;top:1433px;font-size:23px;color:#ddd">33 °C</div>
<div class="nw" style="left:712px;top:1433px;font-size:23px;color:#ddd">35 °C</div>
<div class="ch" style="left:345px;top:1460px;width:94px;height:26px"></div>
<div class="ch" style="left:458px;top:1462px;width:93px;height:24px"></div>
<div class="ch" style="left:568px;top:1460px;width:94px;height:26px"></div>
<div class="ch" style="left:681px;top:1458px;width:93px;height:28px"></div>

<!-- Network -->
<div class="b c" style="left:788px;top:1121px;width:50px;font-size:14px">26,80</div>
<div class="b c" style="left:840px;top:1121px;width:48px;font-size:14px">0,32</div>
<div style="left:795px;top:1150px;width:37px;height:317px;background:#f00010;border-top:34px solid #6b6000"></div>
<div style="left:845px;top:1150px;width:37px;height:317px;background:#6b6000;border-bottom:5px solid #f00010"></div>
<div class="b vt" style="left:743px;top:1298px;width:140px;font-size:20px">Mbit down</div>
<div class="b vt" style="left:793px;top:1298px;width:140px;font-size:20px">Mbit up</div>
<div style="left:783px;top:1474px;width:105px;height:119px;background:#10b810"></div>
<div class="nw" style="left:790px;top:1477px;font-size:15px;color:#000">OFF</div>
<div class="nw" style="left:838px;top:1477px;font-size:16px;color:#000">49 °C</div>

<!-- ===== Bottom ===== -->
<div style="left:0;top:1499px;width:107px;height:94px;background:#0a64c0"></div>
<div class="nw" style="left:2px;top:1500px;font-size:16px;color:#ddd">Profil</div>
<div class="b c" style="left:0;top:1514px;width:95px;font-size:32px;color:#ddd">1</div>
<div class="p" style="left:107px;top:1499px;width:401px;height:94px"></div>
<div style="left:120px;top:1553px;width:313px;height:34px;background:#10106f"></div>
<svg style="left:120px;top:1548px" width="313" height="12" viewBox="0 0 313 12"><polyline points="0,6 20,8 40,5 60,7 80,4 100,7 120,5 140,7 160,4 180,6 200,5 220,7 240,4 260,6 280,5 300,7 313,4" fill="none" stroke="#e01010" stroke-width="1.5"/></svg>
<svg style="left:124px;top:1510px" width="60" height="80" viewBox="0 0 40 54"><path d="M10 8 a4 4 0 0 1 8 0 v25 a9 9 0 1 1 -8 0z" fill="none" stroke="#fff" stroke-width="2.5"/><line x1="14" y1="16" x2="14" y2="38" stroke="#fff" stroke-width="3"/><circle cx="14" cy="41" r="4" fill="#fff"/><text x="22" y="13" fill="#fff" font-size="11" font-family="Liberation Sans">°C</text></svg>
<div class="b nw" style="left:193px;top:1509px;font-size:23px">Peak</div>
<div class="b nw" style="left:296px;top:1502px;font-size:64px;line-height:80px;letter-spacing:-1px">49,0</div>
<div class="st" style="left:441px;top:1503px"><i>ɪ</i>62,25 °C</div>
<div class="st" style="left:441px;top:1524px"><i>ɪ</i>44,00 °C</div>
<div class="st" style="left:441px;top:1545px"><i>ø</i>46,96 °C</div>
<div class="st" style="left:441px;top:1566px"><i>ↄ</i>15 m</div>
<div style="left:508px;top:1499px;width:124px;height:44px;background:#c06800"></div>
<div style="left:508px;top:1543px;width:124px;height:50px;background:#8c2232"></div>
<div class="nw" style="left:519px;top:1506px;font-size:14px;color:#ddd">Warnungen</div>
<div class="nw" style="left:519px;top:1550px;font-size:14px;color:#ddd">Alarme</div>
<div class="b nw" style="left:608px;top:1506px;font-size:26px;color:#ddd">0</div>
<div class="b nw" style="left:608px;top:1553px;font-size:26px;color:#ddd">0</div>
<div style="left:632px;top:1499px;width:151px;height:94px;background:#564a96"></div>
<div class="c" style="left:632px;top:1506px;width:151px;font-size:14px;color:#ddd">Leistungsaufnahme</div>
<div class="b c" style="left:632px;top:1529px;width:151px;font-size:28px;color:#ddd">409 W</div>
</body></html>
